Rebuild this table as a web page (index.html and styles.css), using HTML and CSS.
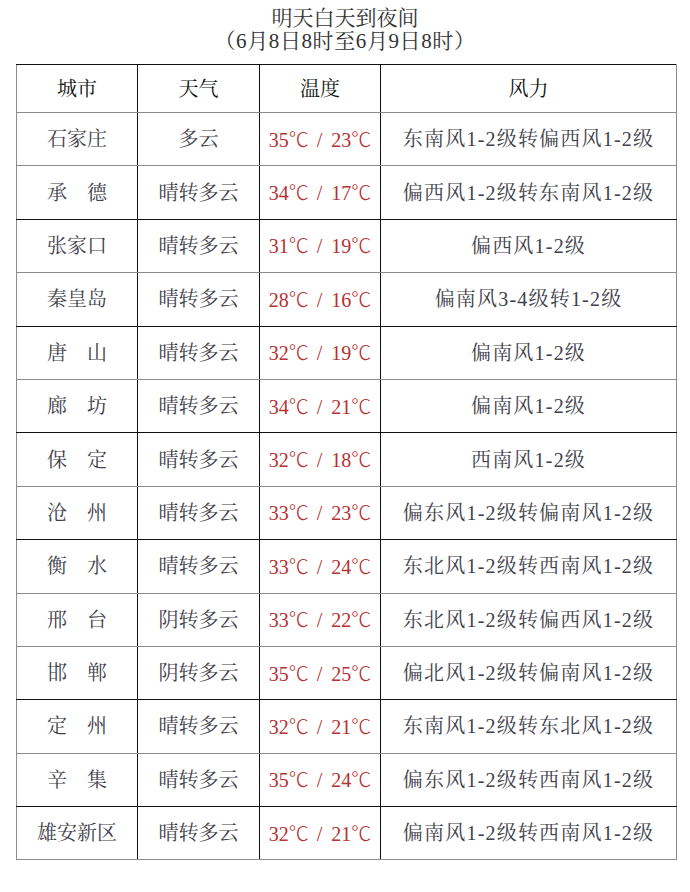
FILE: index.html
```html
<!DOCTYPE html>
<html lang="zh-CN">
<head>
<meta charset="utf-8">
<title>明天白天到夜间</title>
<link rel="stylesheet" href="styles.css">
</head>
<body>
<div class="page">
  <div class="title">
    <div class="title-line">明天白天到夜间</div>
    <div class="title-line sub">（6月8日8时至6月9日8时）</div>
  </div>
  <table class="forecast">
    <colgroup>
      <col class="c-city"><col class="c-weather"><col class="c-temp"><col class="c-wind">
    </colgroup>
    <thead>
      <tr class="head">
        <th>城市</th><th>天气</th><th>温度</th><th>风力</th>
      </tr>
    </thead>
    <tbody>
      <tr><td>石家庄</td><td>多云</td><td class="temp">35<span class="deg">℃</span><span class="sl">/</span>23<span class="deg">℃</span></td><td class="wind">东南风1-2级转偏西风1-2级</td></tr>
      <tr class="dark"><td>承　德</td><td>晴转多云</td><td class="temp">34<span class="deg">℃</span><span class="sl">/</span>17<span class="deg">℃</span></td><td class="wind">偏西风1-2级转东南风1-2级</td></tr>
      <tr><td>张家口</td><td>晴转多云</td><td class="temp">31<span class="deg">℃</span><span class="sl">/</span>19<span class="deg">℃</span></td><td class="wind">偏西风1-2级</td></tr>
      <tr class="dark"><td>秦皇岛</td><td>晴转多云</td><td class="temp">28<span class="deg">℃</span><span class="sl">/</span>16<span class="deg">℃</span></td><td class="wind">偏南风3-4级转1-2级</td></tr>
      <tr><td>唐　山</td><td>晴转多云</td><td class="temp">32<span class="deg">℃</span><span class="sl">/</span>19<span class="deg">℃</span></td><td class="wind">偏南风1-2级</td></tr>
      <tr class="dark"><td>廊　坊</td><td>晴转多云</td><td class="temp">34<span class="deg">℃</span><span class="sl">/</span>21<span class="deg">℃</span></td><td class="wind">偏南风1-2级</td></tr>
      <tr><td>保　定</td><td>晴转多云</td><td class="temp">32<span class="deg">℃</span><span class="sl">/</span>18<span class="deg">℃</span></td><td class="wind">西南风1-2级</td></tr>
      <tr class="dark"><td>沧　州</td><td>晴转多云</td><td class="temp">33<span class="deg">℃</span><span class="sl">/</span>23<span class="deg">℃</span></td><td class="wind">偏东风1-2级转偏南风1-2级</td></tr>
      <tr><td>衡　水</td><td>晴转多云</td><td class="temp">33<span class="deg">℃</span><span class="sl">/</span>24<span class="deg">℃</span></td><td class="wind">东北风1-2级转西南风1-2级</td></tr>
      <tr><td>邢　台</td><td>阴转多云</td><td class="temp">33<span class="deg">℃</span><span class="sl">/</span>22<span class="deg">℃</span></td><td class="wind">东北风1-2级转偏西风1-2级</td></tr>
      <tr class="dark"><td>邯　郸</td><td>阴转多云</td><td class="temp">35<span class="deg">℃</span><span class="sl">/</span>25<span class="deg">℃</span></td><td class="wind">偏北风1-2级转偏南风1-2级</td></tr>
      <tr><td>定　州</td><td>晴转多云</td><td class="temp">32<span class="deg">℃</span><span class="sl">/</span>21<span class="deg">℃</span></td><td class="wind">东南风1-2级转东北风1-2级</td></tr>
      <tr class="dark"><td>辛　集</td><td>晴转多云</td><td class="temp">35<span class="deg">℃</span><span class="sl">/</span>24<span class="deg">℃</span></td><td class="wind">偏东风1-2级转西南风1-2级</td></tr>
      <tr class="last"><td>雄安新区</td><td>晴转多云</td><td class="temp">32<span class="deg">℃</span><span class="sl">/</span>21<span class="deg">℃</span></td><td class="wind">偏南风1-2级转西南风1-2级</td></tr>
    </tbody>
  </table>
</div>
</body>
</html>
```

FILE: styles.css
```css
html, body {
  margin: 0;
  padding: 0;
  background: #ffffff;
}

body {
  font-family: "Liberation Serif", "Noto Serif CJK SC", "Noto Sans CJK SC", serif;
  color: #41414b;
}

.page {
  width: 690px;
  height: 892px;
  padding-top: 7px;
  box-sizing: border-box;
}

.title {
  text-align: center;
  font-size: 21px;
  line-height: 23px;
  color: #333333;
}

.title .sub {
  letter-spacing: 0.6px;
}

.forecast {
  margin: 11px 0 0 16px;
  width: 660px;
  table-layout: fixed;
  border-collapse: collapse;
  font-size: 20px;
}

.c-city { width: 121px; }
.c-weather { width: 122px; }
.c-temp { width: 121px; }
.c-wind { width: 296px; }

.forecast th,
.forecast td {
  padding: 0;
  text-align: center;
  vertical-align: middle;
  white-space: nowrap;
  border-left: 1px solid #111111;
  border-right: 1px solid #111111;
  border-bottom: 1px solid #8c8c8c;
  line-height: 24px;
}

.forecast th:first-child,
.forecast td:first-child {
  border-left-color: #8c8c8c;
}

.forecast th:last-child,
.forecast td:last-child {
  border-right-color: #8c8c8c;
}

.head th {
  border-top: 1px solid #111111;
  height: 47px;
  font-weight: normal;
  color: #111111;
}

.forecast tbody tr {
  height: 53.4px;
}

.forecast tr.dark td {
  border-bottom-color: #111111;
}

.wind {
  letter-spacing: 1.2px;
}

.temp {
  color: #b8302f;
}

.deg {
  font-family: "Noto Sans CJK SC", sans-serif;
  font-weight: 300;
}

.sl {
  display: inline-block;
  padding: 0 9px 0 8px;
}
```
